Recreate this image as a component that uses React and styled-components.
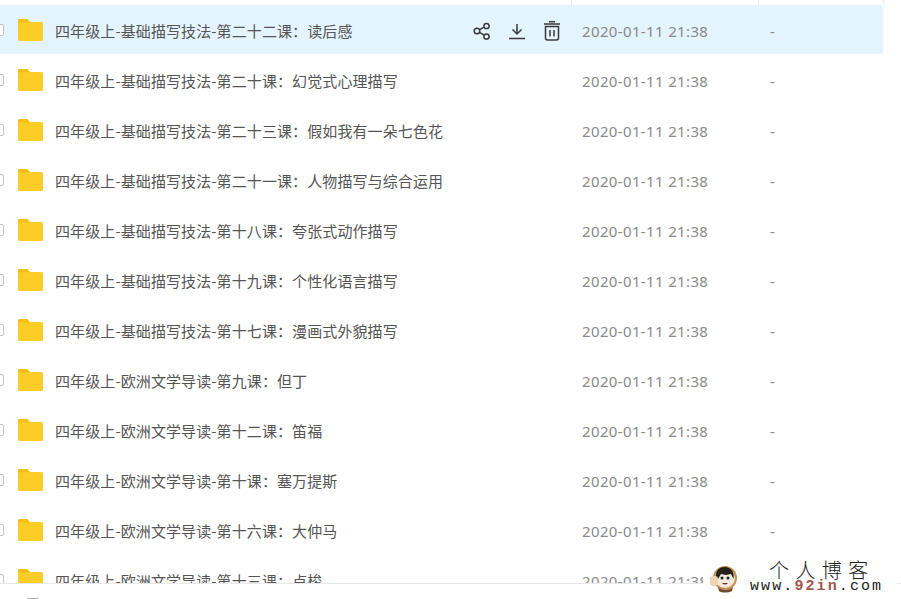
import React from 'react';
import styled, { createGlobalStyle } from 'styled-components';

const GlobalStyle = createGlobalStyle`
  html, body { margin: 0; padding: 0; background: #fff; }
  body { font-family: "Noto Sans CJK SC", "Noto Sans", sans-serif; }
`;

const rows = [
  '四年级上-基础描写技法-第二十二课：读后感',
  '四年级上-基础描写技法-第二十课：幻觉式心理描写',
  '四年级上-基础描写技法-第二十三课：假如我有一朵七色花',
  '四年级上-基础描写技法-第二十一课：人物描写与综合运用',
  '四年级上-基础描写技法-第十八课：夸张式动作描写',
  '四年级上-基础描写技法-第十九课：个性化语言描写',
  '四年级上-基础描写技法-第十七课：漫画式外貌描写',
  '四年级上-欧洲文学导读-第九课：但丁',
  '四年级上-欧洲文学导读-第十二课：笛福',
  '四年级上-欧洲文学导读-第十课：塞万提斯',
  '四年级上-欧洲文学导读-第十六课：大仲马',
  '四年级上-欧洲文学导读-第十三课：卢梭',
];

const Page = styled.div`
  position: relative;
  width: 901px;
  height: 599px;
  display: flex;
  flex-direction: column;
  overflow: hidden;
`;

const HeaderStrip = styled.div`
  flex: none;
  height: 5px;
  width: 884px;
  display: grid;
  grid-template-columns: 572px 187px 125px;
`;

const HeaderCell = styled.div`
  border-right: 1px solid #ececec;
`;

const List = styled.div`
  flex: 1;
  min-height: 0;
  overflow: hidden;
`;

const Row = styled.div`
  width: 883px;
  height: 50px;
  box-sizing: border-box;
  display: grid;
  grid-template-columns: 468px 114px 188px 1fr;
  align-items: center;
  border-bottom: 1px solid transparent;
  background-clip: padding-box;
  border-radius: 0 2px 2px 0;
  background-color: ${p => (p.$active ? '#e3f4fe' : 'transparent')};
`;

const NameCell = styled.div`
  display: flex;
  align-items: center;
  min-width: 0;
`;

const Check = styled.span`
  flex: none;
  width: 12px;
  height: 12px;
  margin-left: -8px;
  box-sizing: border-box;
  border: 1px solid #c4c4c4;
  border-radius: 2px;
  background: #fff;
`;

const FolderIcon = styled.svg`
  flex: none;
  width: 25px;
  height: 22px;
  margin: 0 0 0 14px;
`;

const Name = styled.span`
  margin-left: 12px;
  font-size: 15px;
  line-height: 20px;
  letter-spacing: 0.1px;
  color: #555;
  white-space: nowrap;
  position: relative;
  top: 1px;
`;

const Actions = styled.div`
  display: flex;
  align-items: center;
  gap: 15px;
  margin-left: 4px;
  position: relative;
  top: 1px;
`;

const ActionIcon = styled.svg`
  flex: none;
  width: 20px;
  height: 20px;
  fill: none;
  stroke: #3a3a3a;
  stroke-width: 1.5;
`;

const DateText = styled.span`
  font-family: "Noto Sans", sans-serif;
  font-size: 15px;
  letter-spacing: 0.36px;
  color: #8a8a8a;
  white-space: nowrap;
  position: relative;
  top: 1px;
`;

const Size = styled.span`
  font-family: "Noto Sans", sans-serif;
  font-size: 15px;
  color: #8a8a8a;
  position: relative;
  top: 1px;
`;

const Footer = styled.div`
  flex: none;
  height: 16px;
  box-sizing: border-box;
  border-top: 1px solid #e8e8e8;
  padding: 11px 0 0 0;
  font-size: 12px;
  line-height: 16px;
  color: #999;
  overflow: hidden;
`;

const Watermark = styled.div`
  position: absolute;
  left: 703px;
  top: 558px;
  width: 194px;
  height: 37px;
  display: flex;
  align-items: center;
  gap: 13px;
  padding-left: 7px;
  box-sizing: border-box;
  background: #fff;
`;

const Avatar = styled.svg`
  flex: none;
  width: 27px;
  height: 28px;
  margin-top: 5px;
`;

const MarkText = styled.div`
  display: flex;
  flex-direction: column;
  align-items: flex-start;
  color: #222;
`;

const MarkTitle = styled.div`
  font-family: "Noto Sans CJK SC", serif;
  font-weight: 300;
  font-size: 20px;
  line-height: 20px;
  letter-spacing: 6.4px;
  margin-left: 19px;
`;

const MarkUrl = styled.div`
  font-family: "Liberation Mono", monospace;
  font-size: 15px;
  line-height: 14px;
  letter-spacing: 2.1px;
  white-space: nowrap;
  span { color: #a0554f; font-weight: 700; }
`;

const Folder = () => (
  <FolderIcon viewBox="0 0 25 22">
    <path d="M0 1.500A1.500 1.500 0 0 1 1.500 0H9l3 3H23.500A1.500 1.500 0 0 1 25 4.500V20.500A1.500 1.500 0 0 1 23.500 22H1.500A1.500 1.500 0 0 1 0 20.500Z" fill="#fdcd27" />
    <path d="M0 1.500A1.500 1.500 0 0 1 1.500 0H9l3 3.200H0Z" fill="#f6bd16" />
  </FolderIcon>
);

const ShareIcon = () => (
  <ActionIcon viewBox="0 0 20 20">
    <circle cx="5" cy="10" r="2.800" />
    <circle cx="14.500" cy="5" r="2.600" />
    <circle cx="14.500" cy="15.500" r="2.600" />
    <path d="M7.500 8.600l4.600-2.400M7.500 11.400l4.600 2.800" />
  </ActionIcon>
);

const DownloadIcon = () => (
  <ActionIcon viewBox="0 0 20 20">
    <path d="M10 3v10M5.500 8.500l4.500 4.500 4.500-4.500M2 17.500h16" />
  </ActionIcon>
);

const TrashIcon = () => (
  <ActionIcon viewBox="0 0 20 20">
    <path d="M3.500 5.500h13v11.500a2 2 0 0 1-2 2H5.500a2 2 0 0 1-2-2ZM2 3h16M7 .8h6M8 9v6.500M12 9v6.500" />
  </ActionIcon>
);

const Face = () => (
  <Avatar viewBox="0 0 27 28">
    <circle cx="15" cy="13" r="12" fill="#c98f4e" />
    <circle cx="15" cy="13" r="10" fill="#f3eadf" />
    <path d="M6 13C5 5 10 2 15 2c6 0 10 5 8.500 12l-2.500-5-5 1-5-1-3 5Z" fill="#26201d" />
    <circle cx="12" cy="13" r="1.500" fill="#222" />
    <circle cx="18" cy="13" r="1.500" fill="#222" />
    <path d="M12 18c2 2 4 2 6 0Z" fill="#7a2a22" />
    <path d="M8 22c4 4 11 4 15 0l-1 4c-4 2-10 2-13 0Z" fill="#6f4a34" />
    <rect x="0" y="11" width="8" height="10" rx="3" fill="#efd4b4" />
  </Avatar>
);

export default function App() {
  return (
    <>
      <GlobalStyle />
      <Page>
        <HeaderStrip>
          <HeaderCell />
          <HeaderCell />
          <HeaderCell />
        </HeaderStrip>
        <List>
          {rows.map((name, i) => (
            <Row key={name} $active={i === 0}>
              <NameCell>
                <Check />
                <Folder />
                <Name>{name}</Name>
              </NameCell>
              <Actions>
                {i === 0 && (
                  <>
                    <ShareIcon />
                    <DownloadIcon />
                    <TrashIcon />
                  </>
                )}
              </Actions>
              <DateText>2020-01-11 21:38</DateText>
              <Size>-</Size>
            </Row>
          ))}
        </List>
        <Footer>1027项</Footer>
        <Watermark>
          <Face />
          <MarkText>
            <MarkTitle>个人博客</MarkTitle>
            <MarkUrl>www.<span>92in</span>.com</MarkUrl>
          </MarkText>
        </Watermark>
      </Page>
    </>
  );
}
